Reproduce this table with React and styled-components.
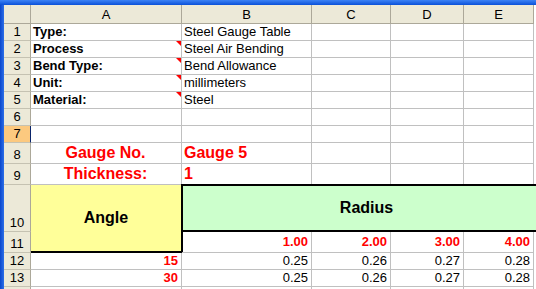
import React from 'react'
import styled, { createGlobalStyle } from 'styled-components'

const GlobalStyle = createGlobalStyle`
  html, body {
    margin: 0;
    padding: 0;
    background: #fff;
  }
  body {
    width: 536px;
    height: 289px;
    overflow: hidden;
    font-family: "Liberation Sans", Arial, sans-serif;
  }
`

const Window = styled.div`
  display: flex;
  flex-direction: column;
  width: 536px;
  height: 289px;
  overflow: hidden;
`

const TitleEdge = styled.div`
  flex: none;
  height: 5px;
  background: linear-gradient(#3d83f5, #0a50d8);
`

const Body = styled.div`
  display: flex;
  flex: 1;
  min-height: 0;
  overflow: hidden;
`

const FrameEdge = styled.div`
  flex: none;
  width: 4px;
  background: linear-gradient(90deg, #0a46cc, #2c6fe8);
`

const Sheet = styled.div`
  display: grid;
  grid-template-columns: 27px 151px 130px 79px 73px 70px;
  grid-template-rows: 19px repeat(7, 17px) 21px 21px 47px 21px repeat(3, 17px);
  font-size: 13px;
  color: #000;
`

const Corner = styled.div`
  box-sizing: border-box;
  background: #ece9d8;
  border-right: 1px solid #aca899;
  border-bottom: 1px solid #aca899;
`

const ColHead = styled.div`
  box-sizing: border-box;
  display: flex;
  align-items: center;
  justify-content: center;
  padding-top: 2px;
  background: #ece9d8;
  border-right: 1px solid #aca899;
  border-bottom: 1px solid #aca899;
  line-height: 16px;
`

const RowHead = styled.div`
  box-sizing: border-box;
  display: flex;
  align-items: flex-end;
  justify-content: center;
  background: ${p => (p.$selected ? '#fcc97f' : '#ece9d8')};
  border-right: 1px solid ${p => (p.$selected ? '#0a246a' : '#aca899')};
  border-bottom: 1px solid #c5c2b2;
  line-height: 16px;
`

const justify = { left: 'flex-start', right: 'flex-end', center: 'center' }

const Cell = styled.div`
  position: relative;
  box-sizing: border-box;
  display: flex;
  align-items: flex-end;
  justify-content: ${p => justify[p.$align || 'left']};
  padding: 0 3px ${p => p.$pb || 0}px 2px;
  border-right: 1px solid #c0c0c0;
  border-bottom: 1px solid #c0c0c0;
  white-space: nowrap;
  font-weight: ${p => (p.$bold ? 700 : 400)};
  font-size: ${p => (p.$big ? 16 : 13)}px;
  line-height: ${p => (p.$big ? 19 : 16)}px;
  color: ${p => (p.$red ? '#ff0000' : '#000')};

  ${p =>
    p.$note &&
    `
    &::after {
      content: '';
      position: absolute;
      top: 0;
      right: 0;
      border-style: solid;
      border-width: 0 5px 5px 0;
      border-color: transparent #ff0000 transparent transparent;
    }
  `}
`

const AngleCell = styled.div`
  box-sizing: border-box;
  grid-row: span 2;
  margin-right: -1px;
  display: flex;
  align-items: center;
  justify-content: center;
  background: #ffff99;
  border-right: 2px solid #000;
  border-bottom: 2px solid #000;
  font-size: 16px;
  font-weight: 700;
`

/* merged B10:F10 - column F runs past the window edge */
const RadiusCell = styled.div`
  box-sizing: border-box;
  grid-column: span 4;
  margin: -1px -18px 0 -1px;
  display: flex;
  align-items: center;
  justify-content: center;
  background: #ccffcc;
  border: 2px solid #000;
  font-size: 16px;
  font-weight: 700;
  position: relative;
  z-index: 1;
`

const columns = ['A', 'B', 'C', 'D', 'E']

const info = [
  ['Type:', 'Steel Gauge Table', false],
  ['Process', 'Steel Air Bending', true],
  ['Bend Type:', 'Bend Allowance', true],
  ['Unit:', 'millimeters', true],
  ['Material:', 'Steel', true],
]

const radii = ['1.00', '2.00', '3.00', '4.00']
const values = ['0.25', '0.26', '0.27', '0.28']
const angles = [15, 30]

function Blanks({ count }) {
  return Array.from({ length: count }, (_, i) => <Cell key={i} />)
}

export default function App() {
  return (
    <Window>
      <GlobalStyle />
      <TitleEdge />
      <Body>
        <FrameEdge />
        <Sheet>
          <Corner />
          {columns.map(c => (
            <ColHead key={c}>{c}</ColHead>
          ))}

          {info.map(([label, value, note], i) => (
            <React.Fragment key={label}>
              <RowHead>{i + 1}</RowHead>
              <Cell $bold $note={note}>{label}</Cell>
              <Cell>{value}</Cell>
              <Blanks count={3} />
            </React.Fragment>
          ))}

          <RowHead>6</RowHead>
          <Blanks count={5} />
          <RowHead $selected>7</RowHead>
          <Blanks count={5} />

          <RowHead>8</RowHead>
          <Cell $align="center" $big $bold $red $pb={1}>Gauge No.</Cell>
          <Cell $big $bold $red $pb={1}>Gauge 5</Cell>
          <Blanks count={3} />

          <RowHead>9</RowHead>
          <Cell $align="center" $big $bold $red $pb={1}>Thickness:</Cell>
          <Cell $big $bold $red $pb={1}>1</Cell>
          <Blanks count={3} />

          <RowHead>10</RowHead>
          <AngleCell>Angle</AngleCell>
          <RadiusCell>Radius</RadiusCell>

          <RowHead>11</RowHead>
          {radii.map(r => (
            <Cell key={r} $align="right" $bold $red $pb={2}>{r}</Cell>
          ))}

          {angles.map((a, i) => (
            <React.Fragment key={a}>
              <RowHead>{12 + i}</RowHead>
              <Cell $align="right" $bold $red>{a}</Cell>
              {values.map(v => (
                <Cell key={v} $align="right">{v}</Cell>
              ))}
            </React.Fragment>
          ))}

          {/* next row only peeks in at the bottom edge */}
          <RowHead />
          <Blanks count={5} />
        </Sheet>
      </Body>
    </Window>
  )
}
